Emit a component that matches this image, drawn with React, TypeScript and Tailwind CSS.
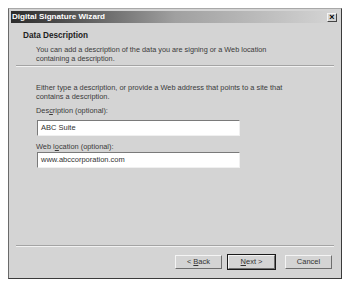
const FONT = { fontFamily: '"Liberation Sans", Arial, sans-serif' };

function Button({ children, isDefault }: { children: React.ReactNode; isDefault?: boolean }) {
  return (
    <div className={isDefault ? "border border-[#1a1a1a]" : "border border-transparent"}>
      <div className="w-[47px] h-[14px] flex items-center justify-center text-[7.5px] text-[#333] bg-[#d4d4d4] border border-t-[#f4f4f4] border-l-[#f4f4f4] border-b-[#6e6e6e] border-r-[#6e6e6e]">
        {children}
      </div>
    </div>
  );
}

function Field({ value }: { value: string }) {
  return (
    <div className="ml-[26px] w-[203px] h-[16px] bg-white border border-t-[#7a7a7a] border-l-[#7a7a7a] border-b-[#f0f0f0] border-r-[#f0f0f0] flex items-center px-[3px] text-[7.5px] text-[#333]">
      {value}
    </div>
  );
}

export default function App() {
  return (
    <div className="w-[349px] h-[285px] bg-white pt-[8px] pl-[8px]" style={FONT}>
      <div className="w-[334px] h-[271px] bg-[#d4d4d4] border border-t-[#a8a8a8] border-l-[#6a6a6a] border-b-[#3a3a3a] border-r-[#3a3a3a] p-[2px] flex flex-col">
        {/* title bar */}
        <div className="h-[12px] bg-gradient-to-r from-[#2c2c2c] via-[#a0a0a0] to-[#d6d6d6] flex items-center justify-between pl-[1px] pr-[2px]">
          <span className="text-white font-bold text-[8.1px] leading-none">Digital Signature Wizard</span>
          <div className="w-[10px] h-[9px] bg-[#d4d4d4] border border-t-[#f4f4f4] border-l-[#f4f4f4] border-b-[#444] border-r-[#444] flex items-center justify-center text-[9px] font-bold leading-none text-black">
            ×
          </div>
        </div>

        {/* header */}
        <div className="pt-[8px] pl-[12px]">
          <div className="font-bold text-[8.2px] leading-[10px] text-[#222]">Data Description</div>
          <div className="mt-[4px] pl-[13px] text-[7.3px] leading-[9px] text-[#3a3a3a]">
            <div>You can add a description of the data you are signing or a Web location</div>
            <div>containing a description.</div>
          </div>
        </div>
        <div className="mt-[2px] mx-[5px] border-t border-t-[#a4a4a4] border-b border-b-[#f2f2f2]" />

        {/* body */}
        <div className="pt-[16px] pl-[25px] text-[7.4px] leading-[9px] text-[#3a3a3a]">
          <div>Either type a description, or provide a Web address that points to a site that</div>
          <div>contains a description.</div>
          <div className="mt-[5px]">
            Des<span className="underline">c</span>ription (optional):
          </div>
        </div>
        <div className="mt-[5px]">
          <Field value="ABC Suite" />
        </div>
        <div className="mt-[6px] pl-[25px] text-[7.4px] leading-[9px] text-[#3a3a3a]">
          Web l<span className="underline">o</span>cation (optional):
        </div>
        <div className="mt-[1px]">
          <Field value="www.abccorporation.com" />
        </div>

        <div className="flex-1" />

        <div className="mx-[5px] border-t border-t-[#a4a4a4] border-b border-b-[#f2f2f2]" />
        <div className="mt-[7px] mb-[6px] flex justify-end pr-[6px]">
          <Button>
            &lt; <span className="underline ml-[2px]">B</span>ack
          </Button>
          <div className="ml-[4px]">
            <Button isDefault>
              <span className="underline">N</span>ext &gt;
            </Button>
          </div>
          <div className="ml-[8px]">
            <Button>Cancel</Button>
          </div>
        </div>
      </div>
    </div>
  );
}
